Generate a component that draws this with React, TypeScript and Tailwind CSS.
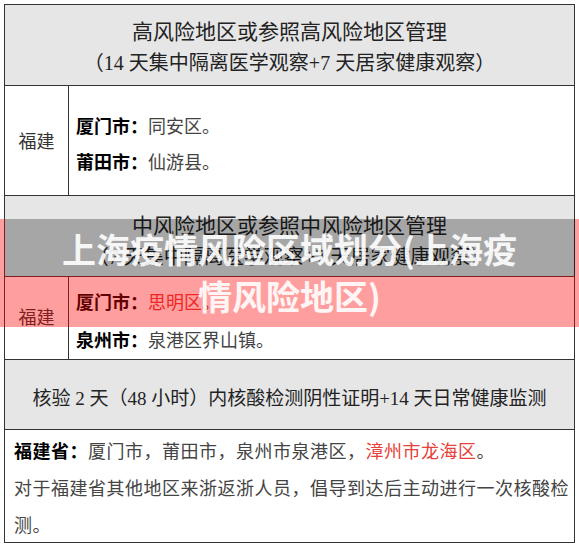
const font = { fontFamily: '"Liberation Serif", "Noto Sans CJK SC", serif' }

function Header({ lines, h, pt }: { lines: string[]; h: string; pt?: string }) {
  return (
    <div className={`${h} ${pt ?? ""} shrink-0 bg-[#e6e6e6] border-b border-[#333] flex flex-col items-center justify-center text-[#222]`}>
      {lines.map((l, i) => (
        <div key={i} className={i === 0 ? "text-[21px] leading-[31px]" : "text-[20px] leading-[31px]"}>
          {l}
        </div>
      ))}
    </div>
  )
}

export default function App() {
  return (
    <div className="relative w-[579px] h-[546px] bg-white overflow-hidden" style={font}>
      <div className="ml-[4px] mt-[4px] w-[571px] border border-[#333] flex flex-col">
        <Header h="h-[81px]" pt="pt-[6px]" lines={["高风险地区或参照高风险地区管理", "（14 天集中隔离医学观察+7 天居家健康观察）"]} />

        {/* 福建 高风险 */}
        <div className="h-[110px] shrink-0 flex border-b border-[#333]">
          <div className="w-[64px] shrink-0 border-r border-[#333] flex items-center justify-center pt-[3px] text-[18px] text-[#333]">
            福建
          </div>
          <div className="flex-1 pl-[7px] pt-[23px] text-[18px] leading-[36px] text-[#444]">
            <div>
              <span className="font-bold text-black">厦门市：</span>同安区。
            </div>
            <div>
              <span className="font-bold text-black">莆田市：</span>仙游县。
            </div>
          </div>
        </div>

        <Header h="h-[81px]" pt="pt-[12px]" lines={["中风险地区或参照中风险地区管理", "（7 天集中隔离医学观察+7 天居家健康观察）"]} />

        {/* 福建 中风险 */}
        <div className="h-[83px] shrink-0 flex border-b border-[#333]">
          <div className="w-[64px] shrink-0 border-r border-[#333] flex items-center justify-center text-[18px] text-[#333]">
            福建
          </div>
          <div className="flex-1 pl-[7px] pt-[7px] text-[18px] leading-[38px] text-[#444]">
            <div>
              <span className="font-bold text-black">厦门市：</span>
              <span className="text-[#e8403a]">思明区</span>。
            </div>
            <div>
              <span className="font-bold text-black">泉州市：</span>泉港区界山镇。
            </div>
          </div>
        </div>

        <div className="h-[70px] shrink-0 bg-[#e6e6e6] border-b border-[#333] flex items-center justify-center pt-[10px] text-[19px] text-[#222]">
          核验 2 天（48 小时）内核酸检测阴性证明+14 天日常健康监测
        </div>

        <div className="h-[112px] shrink-0 pl-[9px] pt-[4px] text-[18px] leading-[37px] tracking-[0.5px] text-[#444]">
          <div>
            <span className="font-bold text-black">福建省：</span>厦门市，莆田市，泉州市泉港区，
            <span className="text-[#e8403a]">漳州市龙海区</span>。
          </div>
          <div>
            对于福建省其他地区来浙返浙人员，倡导到达后主动进行一次核酸检
            <br />
            测。
          </div>
        </div>
      </div>

      {/* title overlay */}
      <div className="absolute left-0 top-[219px] w-[579px] h-[108px] flex flex-col">
        <div className="h-[57px] flex">
          <div className="w-[5px] bg-[rgba(255,0,0,0.38)]" />
          <div className="flex-1 bg-[rgba(0,0,0,0.28)]" />
          <div className="w-[4px] bg-[rgba(255,0,0,0.38)]" />
        </div>
        <div className="flex-1 bg-[rgba(255,0,0,0.38)]" />
        <div
          className="absolute inset-0 pt-[6px] text-center text-[34px] leading-[47px] font-bold text-white/90"
          style={{ fontFamily: '"Noto Sans CJK SC", sans-serif' }}
        >
          上海疫情风险区域划分(上海疫
          <br />
          情风险地区)
        </div>
      </div>
    </div>
  )
}
